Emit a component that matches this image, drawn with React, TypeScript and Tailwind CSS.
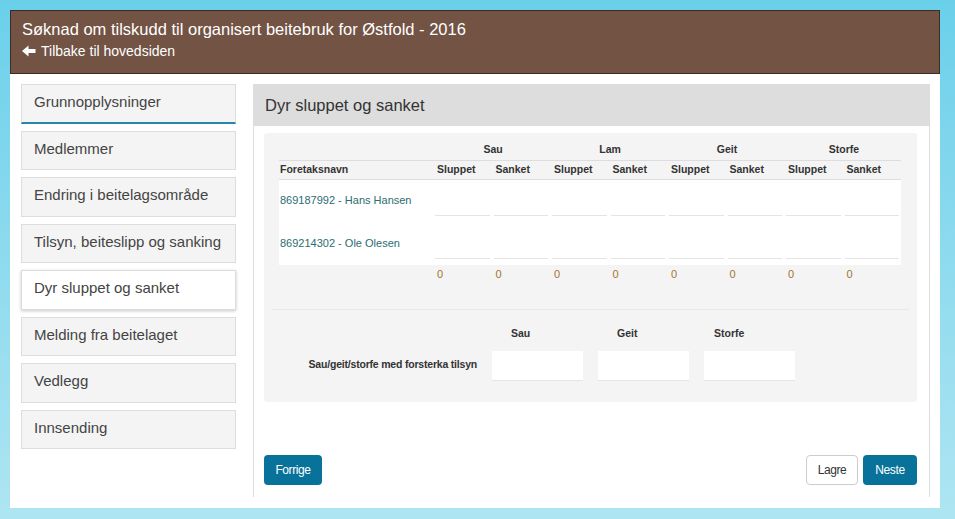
const menu = [
  'Grunnopplysninger',
  'Medlemmer',
  'Endring i beitelagsområde',
  'Tilsyn, beiteslipp og sanking',
  'Dyr sluppet og sanket',
  'Melding fra beitelaget',
  'Vedlegg',
  'Innsending',
];

const animals = ['Sau', 'Lam', 'Geit', 'Storfe'];
const people = ['869187992 - Hans Hansen', '869214302 - Ole Olesen'];

function ArrowLeft() {
  return (
    <svg width="14" height="12" viewBox="0 0 14 12" className="shrink-0">
      <path d="M0 6 L6.5 0.5 V4 H13.5 V8 H6.5 V11.5 Z" fill="white" />
    </svg>
  );
}

function SideItem({ label, index }: { label: string; index: number }) {
  const active = index === 4;
  const first = index === 0;
  return (
    <div
      className={
        active
          ? 'h-[39.5px] flex items-center px-[12px] pb-[3px] border border-[#dddddd] bg-white text-[#444] shadow-[0_1px_3px_rgba(0,0,0,0.22)]'
          : first
            ? 'h-[39.5px] flex items-center px-[12px] pb-[2px] border border-[#dddddd] border-b-2 border-b-[#2b85ab] bg-[#f4f4f4] text-[#444]'
            : 'h-[39.5px] flex items-center px-[12px] pb-[3px] border border-[#dddddd] bg-[#f4f4f4] text-[#444]'
      }
    >
      {label}
    </div>
  );
}

export default function App() {
  return (
    <div className="min-h-[519px] w-full bg-gradient-to-b from-[#6ad0ea] to-[#aee5f2] pt-[10px] pl-[10px] font-['Liberation_Sans',Arial,sans-serif]">
      <div className="w-[930px] h-[498px] bg-white">
        <header className="h-[64px] bg-[#735344] border border-[#3b2b22] px-[11px] pt-[7px] text-white">
          <h1 className="text-[16.5px] leading-[22px]">
            Søknad om tilskudd til organisert beitebruk for Østfold - 2016
          </h1>
          <a className="mt-[2px] flex items-center gap-[5px] text-[14px] leading-[18px]">
            <ArrowLeft />
            Tilbake til hovedsiden
          </a>
        </header>

        <div className="flex pl-[11px] pt-[10px] gap-[17px]">
          <nav className="w-[215px] flex flex-col gap-[7px] text-[15px]">
            {menu.map((m, i) => (
              <SideItem key={m} label={m} index={i} />
            ))}
          </nav>

          <section className="w-[677px] h-[413px] border-x border-[#dddddd] flex flex-col">
            <div className="h-[42px] bg-[#dddddd] px-[11px] flex items-center text-[16.5px] text-[#333]">
              Dyr sluppet og sanket
            </div>

            <div className="ml-[10px] mr-[12px] mt-[7px] bg-[#f4f4f4] rounded-[3px] pt-[8px] pb-[21px] text-[11px] text-[#333]">
              <div className="px-[15px]">
                <table className="table-fixed border-collapse w-[622px]">
                  <colgroup>
                    <col className="w-[154px]" />
                    {Array.from({ length: 8 }).map((_, i) => (
                      <col key={i} className="w-[58.5px]" />
                    ))}
                  </colgroup>
                  <thead className="text-[10.5px]">
                    <tr className="h-[19px] border-b border-[#dddddd]">
                      <th />
                      {animals.map((a) => (
                        <th key={a} colSpan={2} className="font-bold text-center pl-[3px]">
                          {a}
                        </th>
                      ))}
                    </tr>
                    <tr className="h-[19px] border-b border-[#dddddd]">
                      <th className="text-left font-bold pl-px">Foretaksnavn</th>
                      {animals.map((a) => [
                        <th key={a + '1'} className="text-left font-bold pl-[4px]">
                          Sluppet
                        </th>,
                        <th key={a + '2'} className="text-left font-bold pl-[4px]">
                          Sanket
                        </th>,
                      ])}
                    </tr>
                  </thead>
                  <tbody className="bg-white">
                    {people.map((p) => (
                      <tr key={p} className="h-[43px]">
                        <td className="pl-px pb-[1px] text-[#2b6d70]">{p}</td>
                        {Array.from({ length: 8 }).map((_, i) => (
                          <td key={i} className="px-[2px]">
                            <div className="h-[30px] mt-[1px] border-b border-[#e4e4e4]" />
                          </td>
                        ))}
                      </tr>
                    ))}
                  </tbody>
                  <tfoot>
                    <tr className="h-[18px]">
                      <td />
                      {Array.from({ length: 8 }).map((_, i) => (
                        <td key={i} className="pl-[4px] text-[#a0762f]">
                          0
                        </td>
                      ))}
                    </tr>
                  </tfoot>
                </table>
              </div>

              <div className="mx-[8px] mt-[26px] border-t border-[#e8e8e8]" />

              <div className="mt-[14px] grid grid-cols-[213px_91px_91px_91px] gap-x-[15px] gap-y-[9px] font-bold text-[10.5px]">
                <div />
                <div className="h-[18px] leading-[18px] pl-[19px]">Sau</div>
                <div className="h-[18px] leading-[18px] pl-[19px]">Geit</div>
                <div className="h-[18px] leading-[18px] pl-[10px]">Storfe</div>
                <div className="h-[30px] pb-[3px] flex items-center justify-end tracking-[-0.2px]">
                  Sau/geit/storfe med forsterka tilsyn
                </div>
                <div className="h-[30px] bg-white border-b border-[#e6e6e6]" />
                <div className="h-[30px] bg-white border-b border-[#e6e6e6]" />
                <div className="h-[30px] bg-white border-b border-[#e6e6e6]" />
              </div>
            </div>

            <div className="mt-[53px] ml-[10px] mr-[12px] flex items-center justify-between text-[12px] tracking-[-0.4px]">
              <button className="w-[58px] h-[30px] rounded-[4px] bg-[#09729a] text-white">
                Forrige
              </button>
              <div className="flex gap-[5px]">
                <button className="w-[52px] h-[30px] rounded-[4px] bg-white border border-[#cccccc] text-[#333]">
                  Lagre
                </button>
                <button className="w-[54px] h-[30px] rounded-[4px] bg-[#09729a] text-white">
                  Neste
                </button>
              </div>
            </div>
          </section>
        </div>
      </div>
    </div>
  );
}
